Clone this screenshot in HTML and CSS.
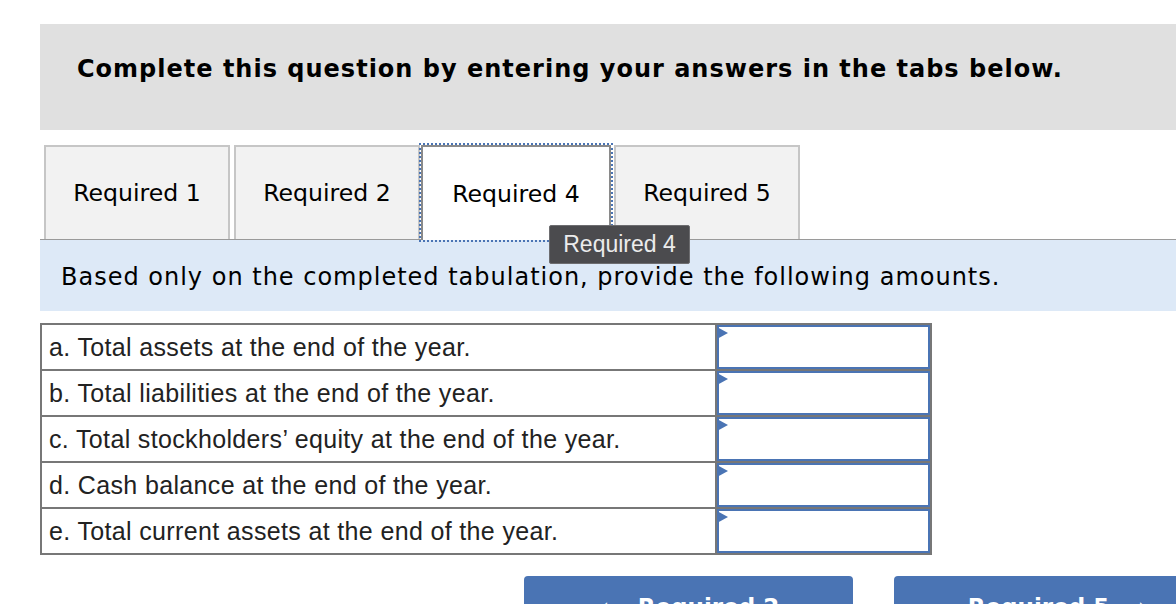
FILE: index.html
```html
<!DOCTYPE html>
<html lang="en">
<head>
<meta charset="utf-8">
<title>Required 4</title>
<link rel="stylesheet" href="styles.css">
</head>
<body>
<div class="page">
  <div class="instructions">Complete this question by entering your answers in the tabs below.</div>
  <div class="tabs">
    <div class="tab">Required 1</div>
    <div class="tab">Required 2</div>
    <div class="tab active">Required 4
      <div class="tooltip">Required 4</div>
    </div>
    <div class="tab">Required 5</div>
  </div>
  <div class="panel">Based only on the completed tabulation, provide the following amounts.</div>
  <table class="amounts">
    <tr><td class="label">a. Total assets at the end of the year.</td><td class="entry"><div class="field"></div></td></tr>
    <tr><td class="label">b. Total liabilities at the end of the year.</td><td class="entry"><div class="field"></div></td></tr>
    <tr><td class="label">c. Total stockholders’ equity at the end of the year.</td><td class="entry"><div class="field"></div></td></tr>
    <tr><td class="label">d. Cash balance at the end of the year.</td><td class="entry"><div class="field"></div></td></tr>
    <tr><td class="label">e. Total current assets at the end of the year.</td><td class="entry"><div class="field"></div></td></tr>
  </table>
  <div class="nav">
    <div class="btn prev"><span class="chev">&lsaquo;</span> Required 2</div>
    <div class="btn next">Required 5 <span class="chev">&rsaquo;</span></div>
  </div>
</div>
</body>
</html>
```

FILE: styles.css
```css
html, body {
  margin: 0;
  padding: 0;
  background: #ffffff;
  overflow: hidden;
}
body {
  width: 1176px;
  height: 604px;
  font-family: "DejaVu Sans", Verdana, sans-serif;
  color: #000;
}
.page {
  padding: 24px 0 0 40px;
  width: 1200px;
}
.instructions {
  background: #e0e0e0;
  height: 106px;
  box-sizing: border-box;
  padding: 30px 0 0 37px;
  font-weight: bold;
  font-size: 24px;
  letter-spacing: 1px;
  line-height: 30px;
}
.tabs {
  display: flex;
  margin-top: 15px;
  padding-left: 4px;
  border-bottom: 1px solid #9a9a9a;
  height: 95px;
  box-sizing: border-box;
}
.tab {
  position: relative;
  width: 186px;
  height: 94px;
  box-sizing: border-box;
  background: #f2f2f2;
  border: 2px solid #c6c6c6;
  border-bottom: none;
  margin-right: 4px;
  display: flex;
  align-items: center;
  justify-content: center;
  font-size: 23.6px;
}
.tab.active {
  background: #ffffff;
  border-color: #8a8a8a;
  width: 190px;
  height: 95px;
  margin-left: -3px;
  margin-right: 3px;
  outline: 2px dotted #4a74b4;
  outline-offset: 0;
}
.tooltip {
  position: absolute;
  left: 126px;
  top: 78px;
  width: 141px;
  height: 39px;
  box-sizing: border-box;
  background: #4b4b4e;
  border: 1px solid #6d6d70;
  border-radius: 2px;
  color: #ececec;
  font-family: "Liberation Sans", Arial, sans-serif;
  font-size: 23px;
  display: flex;
  align-items: center;
  justify-content: center;
  z-index: 2;
}
.panel {
  background: #dde9f7;
  height: 71px;
  box-sizing: border-box;
  padding: 22px 0 0 21px;
  font-size: 24px;
  letter-spacing: 1px;
  line-height: 30px;
}
.amounts {
  margin-top: 12px;
  border-collapse: collapse;
  border: 2px solid #777777;
  font-family: "Liberation Sans", Arial, sans-serif;
  font-size: 25px;
  letter-spacing: 0.35px;
  color: #222;
}
.amounts td {
  border: 2px solid #777777;
  padding: 0;
  height: 44px;
  box-sizing: border-box;
}
.label {
  width: 675px;
  padding-left: 7px !important;
  line-height: 28px;
}
.entry {
  width: 215px;
}
.field {
  position: relative;
  height: 40px;
  border: 2px solid #4a74b4;
  background: #fff;
}
.field::before {
  content: "";
  position: absolute;
  left: -2px;
  top: 0;
  border-left: 11px solid #4a74b4;
  border-top: 6.5px solid transparent;
  border-bottom: 6.5px solid transparent;
}
.nav {
  display: flex;
  gap: 41px;
  margin-top: 21px;
  padding-left: 484px;
}
.btn {
  width: 329px;
  height: 62px;
  flex: none;
  background: #4a74b4;
  border-radius: 4px;
  color: #fff;
  font-weight: bold;
  font-size: 23px;
  display: flex;
  align-items: center;
  justify-content: center;
  gap: 28px;
}
.chev {
  font-weight: normal;
  font-size: 30px;
}
```
